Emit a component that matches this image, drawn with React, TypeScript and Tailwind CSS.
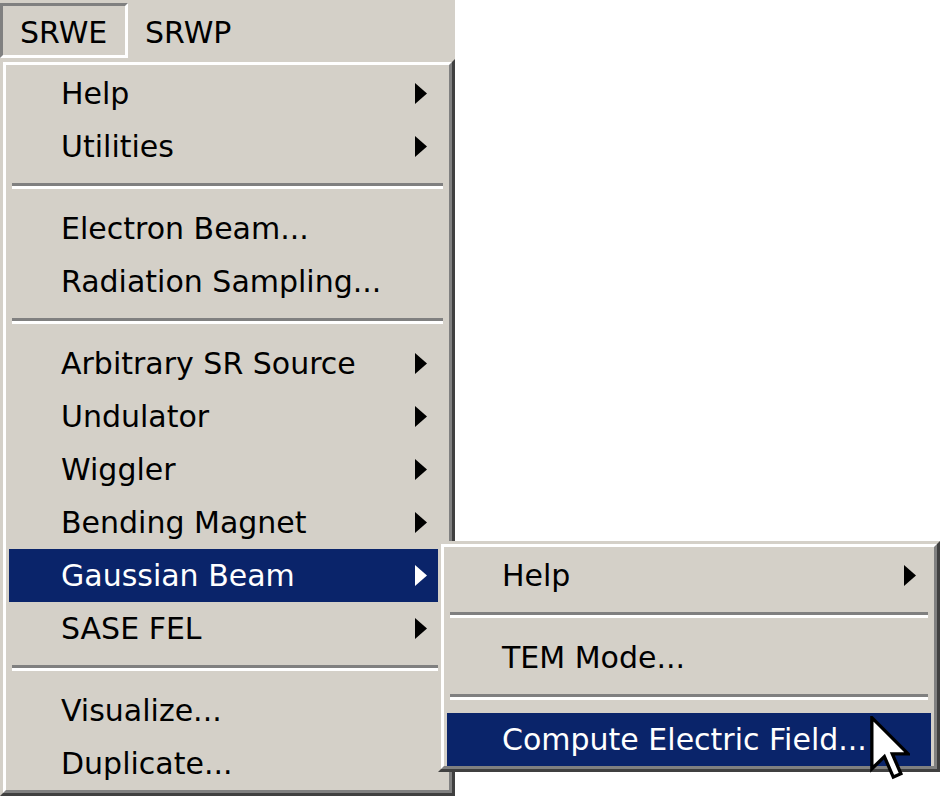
import React from 'react';

type Entry = { label: string; sub?: boolean; active?: boolean } | 'sep';

const mainItems: Entry[] = [
  { label: 'Help', sub: true },
  { label: 'Utilities', sub: true },
  'sep',
  { label: 'Electron Beam...' },
  { label: 'Radiation Sampling...' },
  'sep',
  { label: 'Arbitrary SR Source', sub: true },
  { label: 'Undulator', sub: true },
  { label: 'Wiggler', sub: true },
  { label: 'Bending Magnet', sub: true },
  { label: 'Gaussian Beam', sub: true, active: true },
  { label: 'SASE FEL', sub: true },
  'sep',
  { label: 'Visualize...' },
  { label: 'Duplicate...' },
];

const subItems: Entry[] = [
  { label: 'Help', sub: true },
  'sep',
  { label: 'TEM Mode...' },
  'sep',
  { label: 'Compute Electric Field...', active: true },
];

const Arrow = ({ white }: { white?: boolean }) => (
  <svg width="12" height="21" viewBox="0 0 12 21" className="shrink-0">
    <polygon points="0,0 12,10.5 0,21" fill={white ? '#ffffff' : '#000000'} />
  </svg>
);

// classic 3d frame: outer light/dark, inner white/gray
const Frame = ({ className, children }: { className?: string; children: React.ReactNode }) => (
  <div
    className={`border-[3px] border-t-[#d4d0c8] border-l-[#d4d0c8] border-r-[#404040] border-b-[#404040] bg-[#d4d0c8] ${className ?? ''}`}
  >
    <div className="h-full overflow-hidden border-[3px] border-t-white border-l-white border-r-[#808080] border-b-[#808080]">
      {children}
    </div>
  </div>
);

const MenuList = ({ items, textPad, arrowPad }: { items: Entry[]; textPad: string; arrowPad: string }) => (
  <div className="flex flex-col px-[3px] pt-[2px]">
    {items.map((it, i) =>
      it === 'sep' ? (
        <div key={i} className="h-[29px] shrink-0 px-[3px] pt-[10px]">
          <div className="h-[6px] border-t-[3px] border-b-[3px] border-t-[#808080] border-b-white" />
        </div>
      ) : (
        <div
          key={i}
          className={`flex h-[53px] shrink-0 items-center ${textPad} ${arrowPad} ${
            it.active ? 'bg-[#0a246a] text-white' : 'text-black'
          }`}
        >
          <span className="flex-1 whitespace-nowrap">{it.label}</span>
          {it.sub && <Arrow white={it.active} />}
        </div>
      )
    )}
  </div>
);

export default function App() {
  return (
    <div className="relative h-[796px] w-[940px] overflow-hidden bg-white font-['DejaVu_Sans',sans-serif] text-[30px] leading-none">
      <div className="flex h-[59px] w-[455px] bg-[#d4d0c8] pt-[3px]">
        <div className="flex h-[55px] w-[128px] items-center border-[3px] border-t-[#808080] border-l-[#808080] border-r-white border-b-white pl-[17px] pt-[5px]">
          SRWE
        </div>
        <div className="flex h-[55px] items-center pl-[17px] pt-[5px]">SRWP</div>
      </div>

      <Frame className="h-[737px] w-[455px]">
        <MenuList items={mainItems} textPad="pl-[52px]" arrowPad="pr-[19px]" />
      </Frame>

      <Frame className="absolute left-[438px] top-[541px] h-[231px] w-[502px]">
        <MenuList items={subItems} textPad="pl-[55px]" arrowPad="pr-[15px]" />
      </Frame>

      <svg
        width="40"
        height="66"
        viewBox="0 0 12 20"
        className="absolute left-[870px] top-[716px]"
      >
        <path
          d="M0.5 0.5 V16 L4.3 12.3 L7 18.5 L9.3 17.5 L6.7 11.5 H11.5 Z"
          fill="#ffffff"
          stroke="#000000"
          strokeWidth="1"
          strokeLinejoin="miter"
        />
      </svg>
    </div>
  );
}
